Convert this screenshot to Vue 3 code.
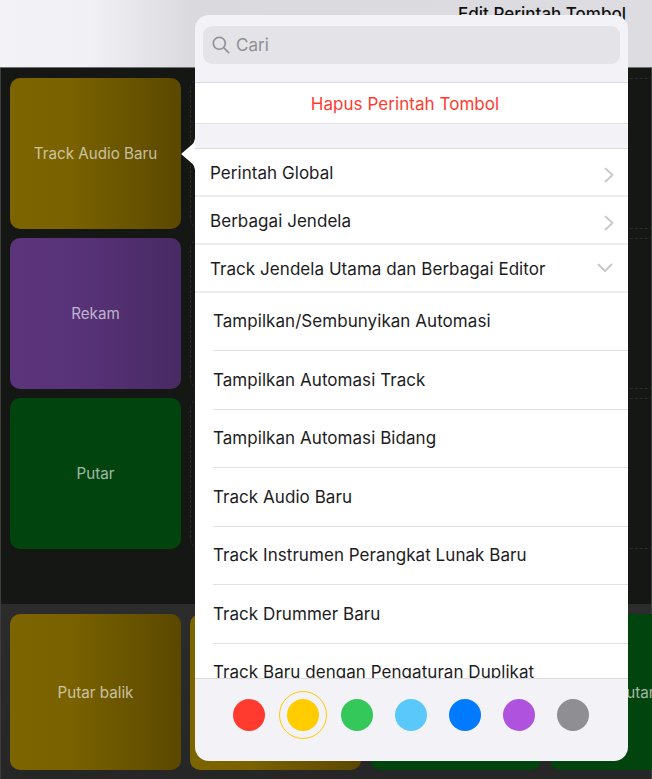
<script setup>
const topCards = [
  { label: 'Track Audio Baru', tone: 'gold' },
  { label: 'Rekam', tone: 'purple' },
  { label: 'Putar', tone: 'green' },
]
const bottomCards = [
  { label: 'Putar balik', tone: 'gold' },
  { label: '', tone: 'gold' },
  { label: '', tone: 'green' },
  { label: 'Putar', tone: 'green' },
]
const menu = [
  { label: 'Perintah Global', icon: 'right' },
  { label: 'Berbagai Jendela', icon: 'right' },
  { label: 'Track Jendela Utama dan Berbagai Editor', icon: 'down' },
]
const subItems = [
  'Tampilkan/Sembunyikan Automasi',
  'Tampilkan Automasi Track',
  'Tampilkan Automasi Bidang',
  'Track Audio Baru',
  'Track Instrumen Perangkat Lunak Baru',
  'Track Drummer Baru',
  'Track Baru dengan Pengaturan Duplikat',
]
const colors = [
  { hex: '#ff3b30' },
  { hex: '#ffcc00', selected: true },
  { hex: '#34c759' },
  { hex: '#5ac8fa' },
  { hex: '#007aff' },
  { hex: '#af52de' },
  { hex: '#8e8e93' },
]
</script>

<template>
  <div class="page">
    <header class="topbar">
      <span class="title">Edit Perintah Tombol</span>
    </header>
    <main class="grid">
      <div v-for="c in topCards" :key="c.label" class="row">
        <div class="card" :class="c.tone">{{ c.label }}</div>
        <div class="slot"></div>
        <div class="slot"></div>
      </div>
    </main>
    <section class="bottom">
      <div v-for="(c, i) in bottomCards" :key="i" class="card bcard" :class="c.tone">{{ c.label }}</div>
    </section>

    <div class="popover">
      <svg class="arrow" width="14" height="32" viewBox="0 0 14 32">
        <path d="M14 0C13.6 2.5 13 4.4 11.7 6L0.6 15.4Q0 16 0.6 16.6L11.7 26C13 27.6 13.6 29.5 14 32Z" fill="#fff" />
      </svg>
      <div class="search-wrap">
        <div class="search">
          <svg width="18" height="18" viewBox="0 0 18 18" fill="none" stroke="#8e8e93" stroke-width="1.6" stroke-linecap="round">
            <circle cx="7.3" cy="7.3" r="6" />
            <path d="M11.8 11.8 16.6 16.6" />
          </svg>
          <span>Cari</span>
        </div>
      </div>
      <div class="delete">Hapus Perintah Tombol</div>
      <div class="menu">
        <div v-for="m in menu" :key="m.label" class="menu-row">
          <span>{{ m.label }}</span>
          <svg v-if="m.icon === 'right'" class="chev-r" width="10" height="16" viewBox="0 0 10 16" fill="none" stroke="#c7c7cc" stroke-width="1.8" stroke-linecap="round" stroke-linejoin="round">
            <path d="M1.5 1.5 8.5 8 1.5 14.5" />
          </svg>
          <svg v-else class="chev-d" width="16" height="10" viewBox="0 0 16 10" fill="none" stroke="#c7c7cc" stroke-width="1.8" stroke-linecap="round" stroke-linejoin="round">
            <path d="M1.5 1.5 8 8 14.5 1.5" />
          </svg>
        </div>
        <div class="sub">
          <div v-for="s in subItems" :key="s" class="sub-row"><span>{{ s }}</span></div>
        </div>
      </div>
      <div class="swatches">
        <div v-for="c in colors" :key="c.hex" class="swatch" :class="{ selected: c.selected }" :style="{ color: c.hex }">
          <i :style="{ background: c.hex }"></i>
        </div>
      </div>
    </div>
  </div>
</template>

<style>
html, body { margin: 0; background: #151714; }
</style>

<style scoped>
.page {
  position: relative;
  width: 652px;
  height: 779px;
  overflow: hidden;
  display: flex;
  flex-direction: column;
  font-family: Inter, "Liberation Sans", sans-serif;
}
.topbar {
  height: 68px;
  flex: none;
  box-sizing: border-box;
  border-bottom: 1px solid #6f6f72;
  background: linear-gradient(90deg, #f2f2f7 0, #f0f0f5 90px, #d9d9de 195px, #dcdce1 100%);
  position: relative;
}
.title {
  position: absolute;
  right: 26px;
  top: 4px;
  font-size: 17px;
  font-weight: 500;
  color: #111;
  white-space: nowrap;
}
.grid {
  flex: none;
  height: 536px;
  box-sizing: border-box;
  padding: 10px 0 0 10px;
  display: flex;
  flex-direction: column;
  gap: 9px;
  background: #151714;
  box-shadow: inset 1px 0 #3c3d3c, inset -1px 0 #3c3d3c;
}
.row {
  display: flex;
  gap: 9px;
  height: 151px;
}
.card {
  flex: none;
  width: 171px;
  border-radius: 10px;
  display: flex;
  align-items: center;
  justify-content: center;
  color: rgba(255, 255, 255, 0.64);
  font-size: 15.2px;
}
.slot {
  flex: none;
  width: 171px;
  box-sizing: border-box;
  border: 1px dashed #2c2e2b;
  border-radius: 10px;
}
.slot + .slot { width: 300px; }
.gold { background: linear-gradient(90deg, #7c6400 0, #7a6200 35%, #5a4800 100%); }
.purple { background: linear-gradient(90deg, #5b347c 0, #59337a 35%, #482a64 100%); }
.green { background: #02440e; }
.bottom {
  flex: 1;
  display: flex;
  gap: 9px;
  padding: 10px 0 0 10px;
  background: linear-gradient(180deg, #2b2c2b, #252625);
  box-shadow: inset 1px 0 #3c3d3c, inset -1px 0 #3c3d3c;
}
.bcard {
  height: 156px;
}
.popover {
  position: absolute;
  left: 195px;
  top: 15px;
  width: 433px;
  height: 746px;
  border-radius: 14px;
  background: #f2f2f7;
  display: flex;
  flex-direction: column;
  color: #1c1c1e;
}
.arrow {
  position: absolute;
  left: -14px;
  top: 123px;
}
.search-wrap {
  flex: none;
  height: 68px;
  box-sizing: border-box;
  padding: 11px 8px 0 8px;
  border-bottom: 1px solid #dcdce0;
}
.search {
  height: 38px;
  border-radius: 9px;
  background: #e3e3e8;
  display: flex;
  align-items: center;
  gap: 6px;
  padding-left: 9px;
  color: #8e8e93;
  font-size: 17px;
}
.delete {
  flex: none;
  height: 41px;
  box-sizing: border-box;
  padding: 1px 13px 0 0;
  background: #fff;
  border-bottom: 1px solid #e2e2e6;
  display: flex;
  align-items: center;
  justify-content: center;
  color: #ff3b30;
  font-size: 17px;
  letter-spacing: 0.05px;
}
.menu {
  flex: none;
  margin-top: 24px;
  height: 530px;
  overflow: hidden;
  background: #fff;
  border-top: 1px solid #dcdce0;
  box-sizing: border-box;
}
.menu-row {
  height: 48px;
  box-sizing: border-box;
  border-bottom: 2px solid #ededf0;
  display: flex;
  align-items: center;
  justify-content: space-between;
  padding: 1px 15px 0;
  font-size: 17px;
  letter-spacing: 0.05px;
}
.chev-r { margin-top: 5px; margin-right: -1px; }
.chev-d { margin-top: -1px; }
.sub { margin-top: -0.5px; }
.sub-row {
  height: 58.5px;
  box-sizing: border-box;
  margin-left: 18px;
  border-bottom: 1px solid #e2e2e6;
  display: flex;
  align-items: center;
  font-size: 17px;
  letter-spacing: 0.05px;
  white-space: nowrap;
}
.swatches {
  flex: 1;
  display: flex;
  align-items: flex-start;
  padding: 20px 0 0 38px;
  gap: 22px;
  border-top: 1px solid #dcdce0;
  border-radius: 0 0 14px 14px;
}
.swatch {
  position: relative;
  width: 32px;
  height: 32px;
}
.swatch i {
  display: block;
  width: 32px;
  height: 32px;
  border-radius: 50%;
}
.swatch.selected::after {
  content: "";
  position: absolute;
  inset: -8px;
  border: 1px solid currentColor;
  border-radius: 50%;
}
</style>
